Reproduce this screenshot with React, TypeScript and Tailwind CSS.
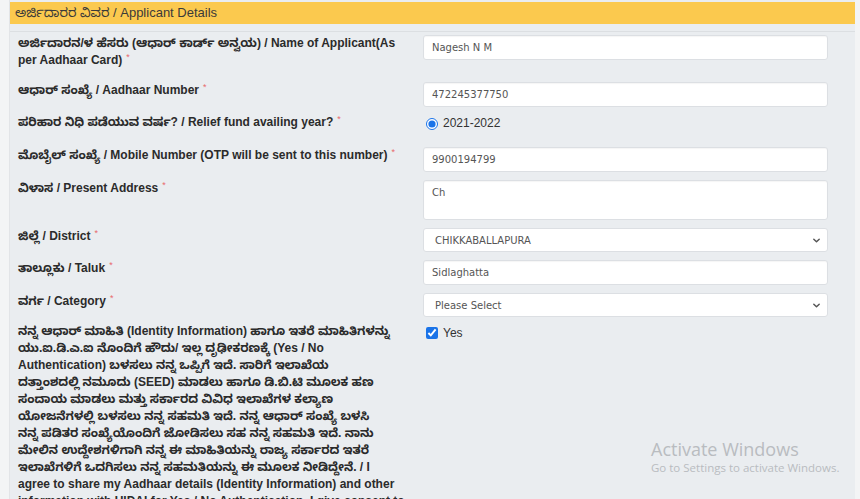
import React from "react";

const labelFont = { fontFamily: '"Liberation Sans", "Noto Sans Kannada", "Noto Sans", Arial, sans-serif' };

function Req() {
  return <span className="ml-[4px] inline-block align-top text-[9px] leading-[11px] text-[#e8696b] font-normal">*</span>;
}

function Label({ children, req = true }: { children: React.ReactNode; req?: boolean }) {
  return (
    <div className="pr-[10px] text-[12px] leading-[17px] font-bold text-[#2b2b2b]" style={labelFont}>
      {children}
      {req && <Req />}
    </div>
  );
}

function TextInput({ value, h = "h-[25px]" }: { value: string; h?: string }) {
  return (
    <div
      className={`${h} w-[405px] rounded-[3px] border border-[#dcdfe3] bg-white pl-[8px] pt-[5px] text-[10px] leading-[13px] text-[#555] shadow-[inset_0_1px_1px_rgba(0,0,0,0.04)]`}
      style={{ fontFamily: '"DejaVu Sans", Verdana, sans-serif' }}
    >
      {value}
    </div>
  );
}

function SelectBox({ value }: { value: string }) {
  return (
    <div
      className="flex h-[24px] w-[405px] items-center justify-between rounded-[3px] border border-[#dcdfe3] bg-white pl-[11px] pr-[6px] text-[10px] text-[#555]"
      style={{ fontFamily: '"DejaVu Sans", Verdana, sans-serif' }}
    >
      <span>{value}</span>
      <svg width="9" height="9" viewBox="0 0 10 10" fill="none">
        <path d="M2 3.5 L5 6.5 L8 3.5" stroke="#555" strokeWidth="1.6" strokeLinecap="round" strokeLinejoin="round" />
      </svg>
    </div>
  );
}

function Row({ children, className = "" }: { children: React.ReactNode; className?: string }) {
  return <div className={`grid grid-cols-[405px_405px] ${className}`}>{children}</div>;
}

const consentLines = [
  "ನನ್ನ ಆಧಾರ್ ಮಾಹಿತಿ (Identity Information) ಹಾಗೂ ಇತರೆ ಮಾಹಿತಿಗಳನ್ನು",
  "ಯು.ಐ.ಡಿ.ಎ.ಐ ನೊಂದಿಗೆ ಹೌದು/ ಇಲ್ಲ ದೃಢೀಕರಣಕ್ಕೆ (Yes / No",
  "Authentication) ಬಳಸಲು ನನ್ನ ಒಪ್ಪಿಗೆ ಇದೆ. ಸಾರಿಗೆ ಇಲಾಖೆಯ",
  "ದತ್ತಾಂಶದಲ್ಲಿ ನಮೂದು (SEED) ಮಾಡಲು ಹಾಗೂ ಡಿ.ಬಿ.ಟಿ ಮೂಲಕ ಹಣ",
  "ಸಂದಾಯ ಮಾಡಲು ಮತ್ತು ಸರ್ಕಾರದ ವಿವಿಧ ಇಲಾಖೆಗಳ ಕಲ್ಯಾಣ",
  "ಯೋಜನೆಗಳಲ್ಲಿ ಬಳಸಲು ನನ್ನ ಸಹಮತಿ ಇದೆ. ನನ್ನ ಆಧಾರ್ ಸಂಖ್ಯೆ ಬಳಸಿ",
  "ನನ್ನ ಪಡಿತರ ಸಂಖ್ಯೆಯೊಂದಿಗೆ ಜೋಡಿಸಲು ಸಹ ನನ್ನ ಸಹಮತಿ ಇದೆ. ನಾನು",
  "ಮೇಲಿನ ಉದ್ದೇಶಗಳಿಗಾಗಿ ನನ್ನ ಈ ಮಾಹಿತಿಯನ್ನು ರಾಜ್ಯ ಸರ್ಕಾರದ ಇತರೆ",
  "ಇಲಾಖೆಗಳಿಗೆ ಒದಗಿಸಲು ನನ್ನ ಸಹಮತಿಯನ್ನು ಈ ಮೂಲಕ ನೀಡಿದ್ದೇನೆ. / I",
  "agree to share my Aadhaar details (Identity Information) and other",
  "information with UIDAI for Yes / No Authentication. I give consent to",
  "seed the details in the Transport Department database.",
];

export default function App() {
  return (
    <div className="relative h-[499px] w-[860px] overflow-hidden bg-[#f3f4f5]">
      <div className="ml-[9px] mr-[5px] h-full border-l border-[#e2e4e7] bg-[#eaedf0] pt-[2px]">
        <div
          className="flex h-[22px] items-center bg-[#fbc94e] pl-[5px] text-[13px] text-[#3a3a3a]"
          style={{ fontFamily: '"Liberation Sans", "Noto Sans Kannada", "Noto Sans", Arial, sans-serif' }}
        >
          ಅರ್ಜಿದಾರರ ವಿವರ / Applicant Details
        </div>
        <div className="mt-[7px] border-t border-[#dcdfe2] pl-[8px] pt-[3px]">
          <Row>
            <Label>ಅರ್ಜಿದಾರನ/ಳ ಹೆಸರು (ಆಧಾರ್ ಕಾರ್ಡ್ ಅನ್ವಯ) / Name of Applicant(As per Aadhaar Card)</Label>
            <TextInput value="Nagesh N M" />
          </Row>
          <Row className="mt-[13px]">
            <Label>ಆಧಾರ್ ಸಂಖ್ಯೆ / Aadhaar Number</Label>
            <TextInput value="472245377750" />
          </Row>
          <Row className="mt-[7px]">
            <Label>ಪರಿಹಾರ ನಿಧಿ ಪಡೆಯುವ ವರ್ಷ? / Relief fund availing year?</Label>
            <div className="flex h-[17px] items-center gap-[5px] pl-[3px] pt-[2px]">
              <input type="radio" checked readOnly className="m-0 h-[12px] w-[12px] accent-[#1a73e8]" />
              <span className="text-[12px] leading-[15px] text-[#333]" style={labelFont}>2021-2022</span>
            </div>
          </Row>
          <Row className="mt-[16px]">
            <Label>ಮೊಬೈಲ್ ಸಂಖ್ಯೆ / Mobile Number (OTP will be sent to this number)</Label>
            <TextInput value="9900194799" />
          </Row>
          <Row className="mt-[8px]">
            <Label>ವಿಳಾಸ / Present Address</Label>
            <TextInput value="Ch" h="h-[40px]" />
          </Row>
          <Row className="mt-[8px]">
            <Label>ಜಿಲ್ಲೆ / District</Label>
            <SelectBox value="CHIKKABALLAPURA" />
          </Row>
          <Row className="mt-[8px]">
            <Label>ತಾಲ್ಲೂಕು / Taluk</Label>
            <TextInput value="Sidlaghatta" />
          </Row>
          <Row className="mt-[8px]">
            <Label>ವರ್ಗ / Category</Label>
            <SelectBox value="Please Select" />
          </Row>
          <Row className="mt-[6px]">
            <Label req={false}>
              {consentLines.map((l, i) => (
                <span key={i} className="block whitespace-nowrap">
                  {l}
                </span>
              ))}
            </Label>
            <div className="flex items-start gap-[5px] pl-[3px] pt-[3px]">
              <input type="checkbox" checked readOnly className="m-0 mt-[1px] h-[12px] w-[12px] accent-[#1a73e8]" />
              <span className="text-[12px] leading-[15px] text-[#333]" style={labelFont}>Yes</span>
            </div>
          </Row>
        </div>
      </div>
      <div className="pointer-events-none absolute left-[651px] top-[438px] text-[#b9bcc0]" style={{ fontFamily: '"Open Sans", "Noto Sans", sans-serif' }}>
        <div className="text-[18px] leading-[22px]">Activate Windows</div>
        <div className="text-[11.5px] leading-[15px]">Go to Settings to activate Windows.</div>
      </div>
    </div>
  );
}
